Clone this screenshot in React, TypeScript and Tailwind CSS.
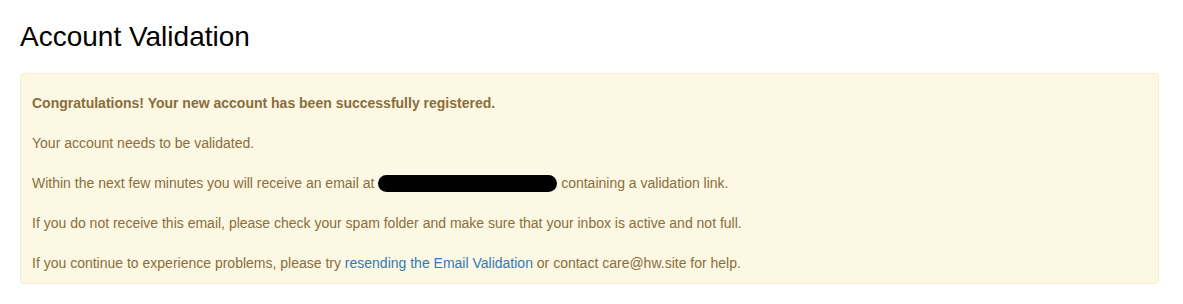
import React from 'react';

const App: React.FC = () => {
    return (
        <div className="bg-white min-h-[304px] pl-5 pr-6 pt-5 font-['Liberation_Sans',Arial,sans-serif]">
            <h1 className="text-[28px] leading-[33px] text-black font-normal">Account Validation</h1>
            <div className="mt-5 rounded border border-[#faebcc] bg-[#fcf8e3] px-[11px] pt-[19px] pb-[10px] text-[14px] leading-5 text-[#8a6d3b]">
                <div className="flex flex-col gap-5">
                    <p className="font-bold">Congratulations! Your new account has been successfully registered.</p>
                    <p>Your account needs to be validated.</p>
                    <p className="flex items-center">
                        <span>Within the next few minutes you will receive an email at&nbsp;</span>
                        <span className="inline-block h-[17px] w-[179px] rounded-full bg-black" />
                        <span>&nbsp;containing a validation link.</span>
                    </p>
                    <p>If you do not receive this email, please check your spam folder and make sure that your inbox is active and not full.</p>
                    <p>
                        If you continue to experience problems, please try{' '}
                        <a href="#" className="text-[#337ab7]">resending the Email Validation</a>{' '}
                        or contact care@hw.site for help.
                    </p>
                </div>
            </div>
        </div>
    );
};

export default App;
